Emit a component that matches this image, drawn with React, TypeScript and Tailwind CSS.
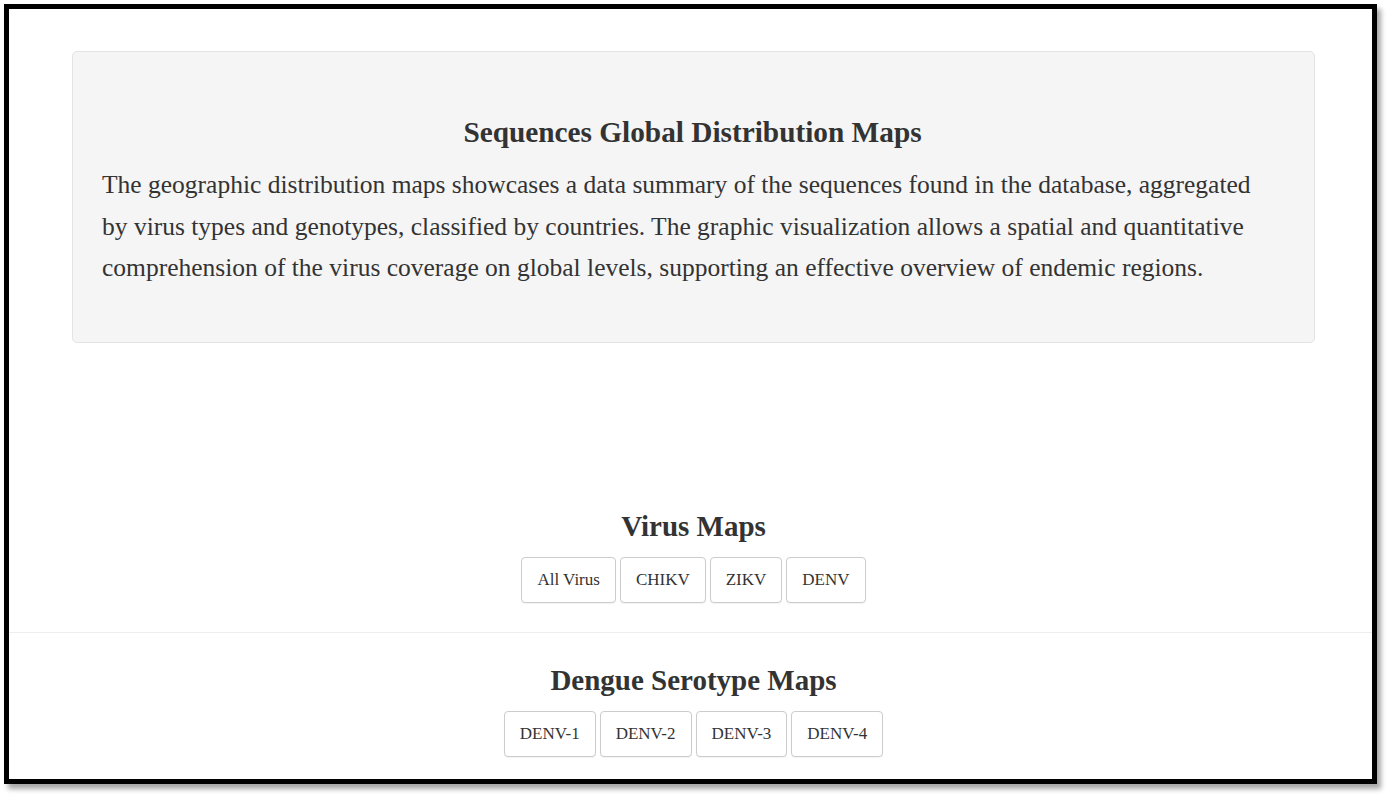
const virusMaps = ["All Virus", "CHIKV", "ZIKV", "DENV"];
const serotypeMaps = ["DENV-1", "DENV-2", "DENV-3", "DENV-4"];

function MapButton({ label }: { label: string }) {
  return (
    <button
      type="button"
      className="h-[46px] rounded-[4px] border border-[#cccccc] bg-white px-[15px] text-[17px] text-[#333333] shadow-[0_1px_1px_rgba(0,0,0,0.05)]"
    >
      {label}
    </button>
  );
}

function MapGroup({ title, items }: { title: string; items: string[] }) {
  return (
    <div className="flex flex-col items-center">
      <h2 className="text-[29px] font-bold leading-[40px] text-[#333333]">{title}</h2>
      <div className="mt-[11px] flex gap-[4px]">
        {items.map((item) => (
          <MapButton key={item} label={item} />
        ))}
      </div>
    </div>
  );
}

export default function App() {
  return (
    <div
      className="h-[797px] w-[1388px] overflow-hidden bg-white pl-[4px] pt-[4px]"
      style={{ fontFamily: '"Liberation Serif", "Times New Roman", serif' }}
    >
      <div className="h-[780px] w-[1373px] border-[5px] border-black bg-white shadow-[4px_5px_5px_rgba(0,0,0,0.35)]">
        <div className="ml-[63px] mt-[42px] h-[292px] w-[1243px] rounded-[5px] border border-[#e3e3e3] bg-[#f5f5f5] pl-[29px] pr-[40px] pt-[60px]">
          <h1 className="mr-[-11px] ml-[-2px] text-center text-[29.3px] font-bold leading-[40px] text-[#333333]">
            Sequences Global Distribution Maps
          </h1>
          <p className="mt-[12px] text-[25.5px] leading-[41.5px] text-[#333333]">
            The geographic distribution maps showcases a data summary of the sequences found in the database, aggregated
            by virus types and genotypes, classified by countries. The graphic visualization allows a spatial and
            quantitative comprehension of the virus coverage on global levels, supporting an effective overview of
            endemic regions.
          </p>
        </div>

        <div className="mt-[163px] pl-[6px]">
          <MapGroup title="Virus Maps" items={virusMaps} />
        </div>

        <div className="mt-[29px] border-t border-[#eeeeee] pt-[27px] pl-[6px]">
          <MapGroup title="Dengue Serotype Maps" items={serotypeMaps} />
        </div>
      </div>
    </div>
  );
}
